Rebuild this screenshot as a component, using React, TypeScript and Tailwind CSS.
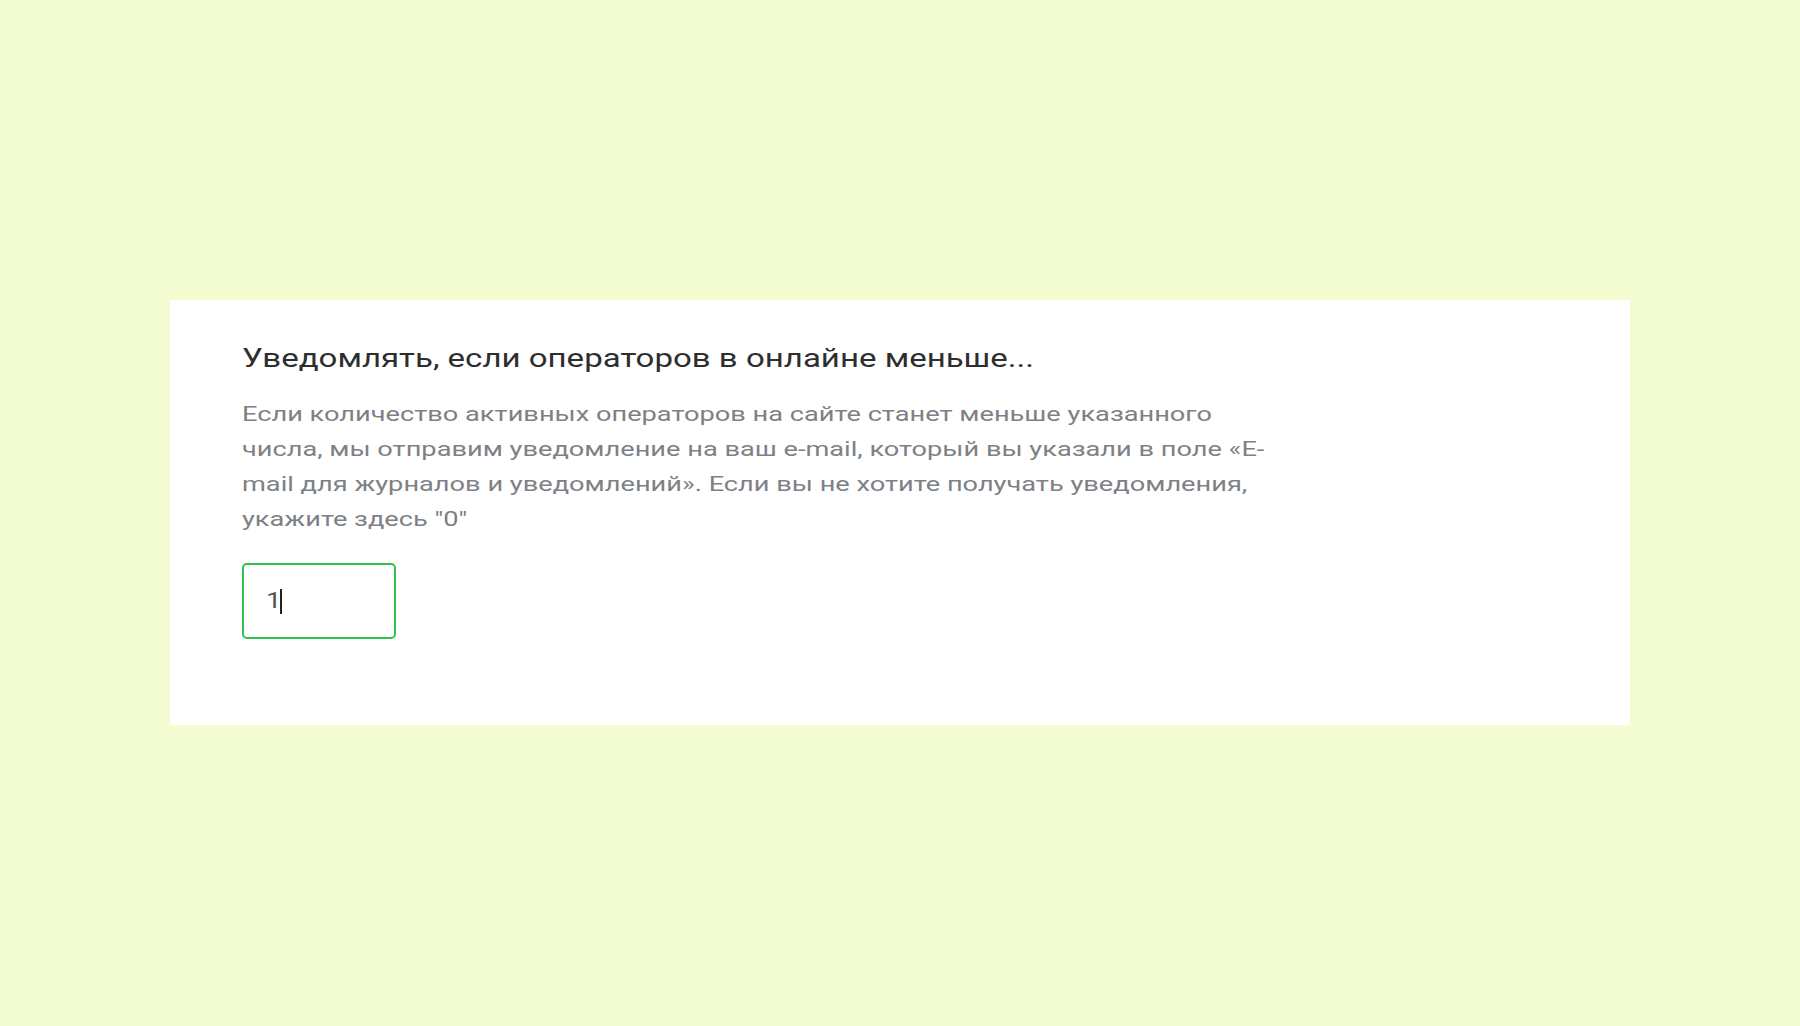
import React from "react";

export default function App() {
  return (
    <div className="w-[1800px] h-[1026px] bg-[#f4fdd2] pt-[300px] pl-[170px]" style={{ fontFamily: "Roboto, 'Noto Sans', sans-serif" }}>
      <div className="w-[1460px] h-[425px] bg-white pl-[72px] pt-[40px]">
        <h2 className="w-[640px] origin-left scale-x-[1.27] text-[26px] leading-[36px] text-[#2e2e2e] font-normal whitespace-nowrap">
          Уведомлять, если операторов в онлайне меньше...
        </h2>
        <p className="mt-[21px] w-[810px] origin-left scale-x-[1.295] text-[21px] leading-[35px] text-[#7d8186] whitespace-nowrap">
          Если количество активных операторов на сайте станет меньше указанного
          <br />
          числа, мы отправим уведомление на ваш e-mail, который вы указали в поле «E-
          <br />
          mail для журналов и уведомлений». Если вы не хотите получать уведомления,
          <br />
          укажите здесь "0"
        </p>
        <div className="mt-[26px] w-[154px] h-[76px] border-2 border-[#2ec24a] rounded-[5px] flex items-center pl-[22px]">
          <span className="inline-block origin-left scale-x-[1.25] text-[22px] leading-none text-[#555]">1</span>
          <span className="ml-[2px] w-[2px] h-[25px] bg-[#222]"></span>
        </div>
      </div>
    </div>
  );
}
